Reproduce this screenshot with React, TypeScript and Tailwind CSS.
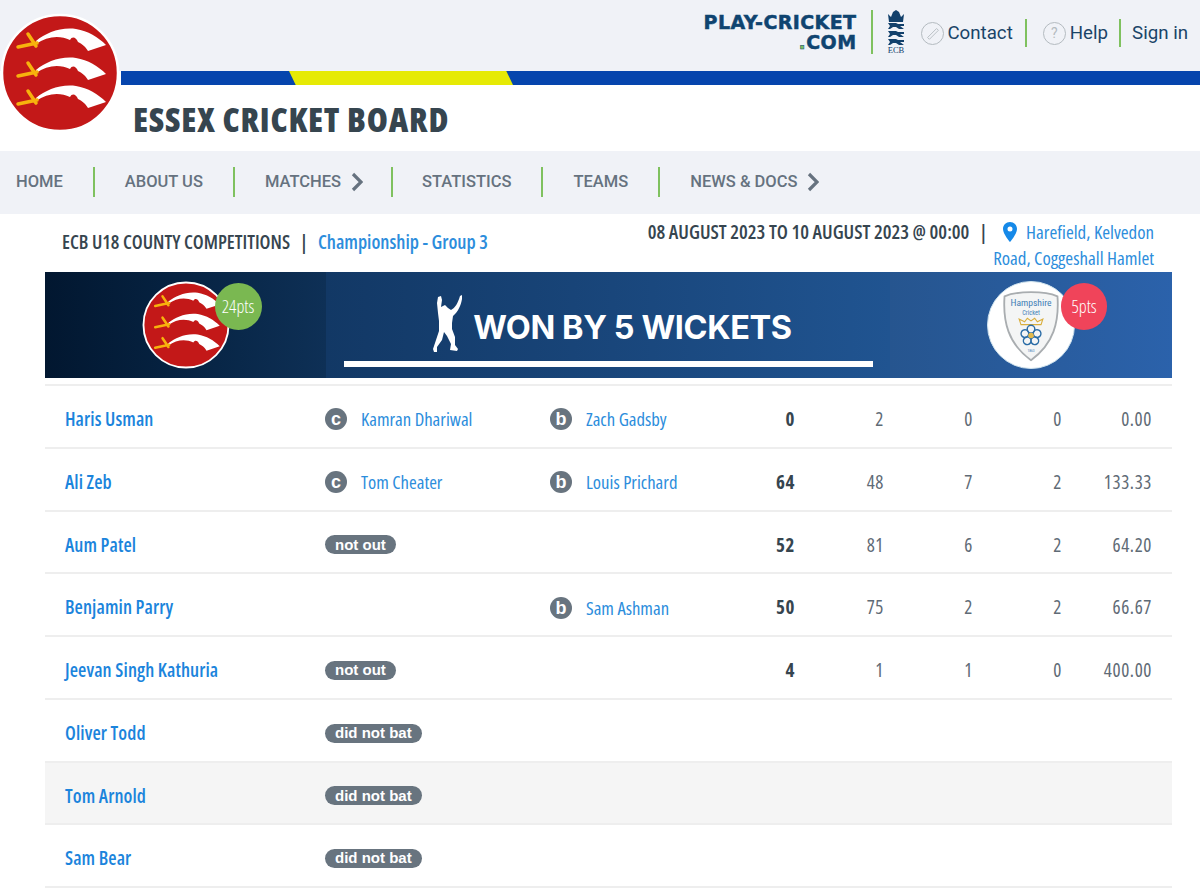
const cond = "font-['Open_Sans',sans-serif] [font-stretch:75%]";
const full = "[font-stretch:100%]";

type Row = {
  name: string;
  how?: string;
  fielder?: string;
  bowler?: string;
  stats?: string[];
  shaded?: boolean;
};

const rows: Row[] = [
  { name: "Haris Usman", how: "c", fielder: "Kamran Dhariwal", bowler: "Zach Gadsby", stats: ["0", "2", "0", "0", "0.00"] },
  { name: "Ali Zeb", how: "c", fielder: "Tom Cheater", bowler: "Louis Prichard", stats: ["64", "48", "7", "2", "133.33"] },
  { name: "Aum Patel", how: "not out", stats: ["52", "81", "6", "2", "64.20"] },
  { name: "Benjamin Parry", bowler: "Sam Ashman", stats: ["50", "75", "2", "2", "66.67"] },
  { name: "Jeevan Singh Kathuria", how: "not out", stats: ["4", "1", "1", "0", "400.00"] },
  { name: "Oliver Todd", how: "did not bat" },
  { name: "Tom Arnold", how: "did not bat", shaded: true },
  { name: "Sam Bear", how: "did not bat" },
];

const nav = [
  { label: "Home" },
  { label: "About Us" },
  { label: "Matches", more: true },
  { label: "Statistics" },
  { label: "Teams" },
  { label: "News & Docs", more: true },
];

function EssexBadge({ className }: { className: string }) {
  return (
    <svg viewBox="0 0 120 120" className={className}>
      <circle cx="60" cy="60" r="58" fill="#c31818" stroke="#fff" strokeWidth="2.5" />
      {[0, 29, 57].map((y) => (
        <g key={y} transform={`translate(0 ${y})`}>
          <path
            d="M36 28C46 20 60 14 76 16C88 18 98 24 106 32L88 38C85 33 82 31 78 29C76 24 72 23 70 27C60 22 47 23 36 31Z"
            fill="#fff"
          />
          <path d="M18 34L37 30M28 21L36 33" stroke="#f7b20d" strokeWidth="3.5" strokeLinecap="round" fill="none" />
        </g>
      ))}
    </svg>
  );
}

function Sep({ h = "h-[30px]" }: { h?: string }) {
  return <div className={`w-[2px] shrink-0 bg-[#7fc15f] ${h}`} />;
}

function EcbLogo() {
  return (
    <svg viewBox="0 0 20 44" className="w-[20px] h-[44px]">
      <path d="M2 4L5 7L7 2L10 0L13 2L15 7L18 4L17 12H3Z" fill="#12406b" />
      {[13, 21, 29].map((y) => (
        <path
          key={y}
          d={`M2 ${y}H10L12 ${y + 1}H18V${y + 3}L14 ${y + 3}L18 ${y + 6}H13L10 ${y + 4}H7L4 ${y + 6}H2L4 ${y + 3}Z`}
          fill="#12406b"
        />
      ))}
      <text x="10" y="43" textAnchor="middle" fontSize="8.5" fill="#12406b" fontFamily="Liberation Serif, serif">
        ECB
      </text>
    </svg>
  );
}

function BowlerFigure() {
  return (
    <svg viewBox="0 0 30 58" className="w-[30px] h-[58px]">
      <path
        fill="#fff"
        d="M5 2L8 1L9 5L8 12L12 10L15 13L18 15C22 13 25 8 27 1L29 0L29 4C28 10 25 17 20 21L19 28L19 34L22 42L22 50L25 54L24 56L17 55L18 49L14 41L11 37L9 45L4 52L4 57L1 57L0 54L3 45L6 36L6 26L5 18L4 8Z"
      />
    </svg>
  );
}

function HampshireBadge() {
  return (
    <div className="w-[88px] h-[88px] rounded-full bg-white border border-[#cfe3ee] flex items-center justify-center">
      <svg viewBox="0 0 70 80" className="w-[64px] h-[73px]">
        <path d="M6 8C20 2 50 2 64 8C66 36 60 60 35 78C10 60 4 36 6 8Z" fill="#f4f5f5" stroke="#a9adb0" strokeWidth="2" />
        <text x="35" y="19" textAnchor="middle" fontSize="10.5" fill="#3f7fb5" fontFamily="Roboto, sans-serif">
          Hampshire
        </text>
        <text x="35" y="28" textAnchor="middle" fontSize="7" fill="#3f7fb5" fontFamily="Roboto, sans-serif">
          Cricket
        </text>
        <path d="M24 39L22 33L28 36L31 32L35 35L39 32L42 36L48 33L46 39Z" fill="none" stroke="#d9ae3c" strokeWidth="1.2" />
        <g fill="none" stroke="#2a6ca6" strokeWidth="1.6">
          {[0, 72, 144, 216, 288].map((a) => (
            <circle key={a} cx="35" cy="44" r="4.2" transform={`rotate(${a} 35 51)`} />
          ))}
        </g>
        <circle cx="35" cy="51" r="3" fill="#e3b94a" />
        <text x="35" y="69" textAnchor="middle" fontSize="4" fill="#3f7fb5" fontFamily="Roboto, sans-serif">
          1863
        </text>
      </svg>
    </div>
  );
}

function Pill({ text }: { text: string }) {
  return (
    <span className="inline-flex items-center h-[19px] px-[10px] rounded-full bg-[#68747f] text-white text-[15px] font-bold font-['Liberation_Sans',sans-serif]">
      {text}
    </span>
  );
}

function Dis({ letter, name }: { letter: string; name: string }) {
  return (
    <div className="flex items-center gap-[14px]">
      <span className="w-[22px] h-[22px] rounded-full bg-[#68747f] text-white text-[18px] leading-none font-bold flex items-center justify-center font-['Liberation_Sans',sans-serif]">
        {letter}
      </span>
      <span className="text-[#2c8ddc] text-[18.7px]">{name}</span>
    </div>
  );
}

export default function App() {
  return (
    <div className={`relative w-[1200px] h-[890px] overflow-hidden bg-white ${cond}`}>
      <div className="absolute left-0 top-[13px] w-[120px] h-[120px] z-10">
        <EssexBadge className="w-[120px] h-[120px]" />
      </div>

      {/* top bar */}
      <div className={`h-[71px] bg-[#f0f2f7] flex items-center justify-end pr-[12px] font-['Roboto',sans-serif] ${full}`}>
        <div className="flex flex-col items-end text-[#0f4470] font-['DejaVu_Sans',sans-serif] font-bold [-webkit-text-stroke:0.5px_#0f4470] text-[19px] leading-[20px] tracking-[0.4px] mr-[15px] mb-[7px]">
          <span>PLAY-CRICKET</span>
          <span>
            <span className="text-[#7fc15f]">.</span>COM
          </span>
        </div>
        <div className="mb-[7px]">
          <Sep h="h-[44px]" />
        </div>
        <div className="ml-[13px] mr-[15px] mb-[7px]">
          <EcbLogo />
        </div>
        <div className="w-[23px] h-[23px] rounded-full border border-[#b4bbc0] flex items-center justify-center mr-[3px] mb-[5px]">
          <svg viewBox="0 0 20 20" className="w-[18px] h-[18px]">
            <path d="M4 15L14 5L16 7L6 17Z" fill="none" stroke="#b4bbc0" strokeWidth="1" />
          </svg>
        </div>
        <span className="text-[18.7px] text-[#1a4468] mr-[12px] mb-[5px]">Contact</span>
        <div className="mb-[5px]">
          <Sep h="h-[28px]" />
        </div>
        <div className="ml-[16px] w-[23px] h-[23px] rounded-full border border-[#b4bbc0] flex items-center justify-center text-[#b4bbc0] text-[14px] mr-[4px] mb-[5px]">
          ?
        </div>
        <span className="text-[18.7px] text-[#1a4468] mr-[11px] mb-[5px]">Help</span>
        <div className="mb-[5px]">
          <Sep h="h-[28px]" />
        </div>
        <span className="text-[18.7px] text-[#1a4468] ml-[11px] mb-[5px]">Sign in</span>
      </div>

      {/* colour strip */}
      <div className="h-[14px] ml-[121px] bg-[#0645ad]">
        <div className="ml-[168px] w-[224px] h-full bg-[#e6ea05] [clip-path:polygon(0_0,97%_0,100%_100%,3%_100%)]" />
      </div>

      <div className="h-[66px] pl-[133px] pt-[12px]">
        <h1 className="text-[#36454f] text-[34px] leading-[44px] font-extrabold tracking-[0.8px]">ESSEX CRICKET BOARD</h1>
      </div>

      {/* nav */}
      <div className={`h-[63px] pb-[1px] bg-[#f0f2f7] flex items-center pl-[16px] font-['Roboto',sans-serif] font-medium text-[16.5px] text-[#66727f] uppercase ${full}`}>
        {nav.map((n, i) => (
          <div key={n.label} className="flex items-center">
            <span>{n.label}</span>
            {n.more && (
              <svg viewBox="0 0 12 20" className="ml-[10px] w-[12px] h-[20px]">
                <path d="M2 2L10 10L2 18" fill="none" stroke="#66727f" strokeWidth="3.2" />
              </svg>
            )}
            {i < nav.length - 1 && (
              <div className={n.more ? "ml-[28px] mr-[29px]" : "ml-[30px] mr-[30px]"}>
                <Sep />
              </div>
            )}
          </div>
        ))}
      </div>

      {/* match info */}
      <div className="h-[58px] flex justify-between pl-[62px] pr-[46px]">
        <div className="pt-[14px] flex gap-[10px] font-semibold text-[19.2px]">
          <span className="text-[#36454f]">ECB U18 COUNTY COMPETITIONS</span>
          <span className="text-[#36454f]">|</span>
          <span className="text-[#2c8ddc]">Championship - Group 3</span>
        </div>
        <div className="pt-[5px] w-[560px] text-right leading-[26px] text-[18.9px]">
          <span className="text-[#36454f] font-semibold text-[19.6px]">08 AUGUST 2023 TO 10 AUGUST 2023 @ 00:00</span>
          <span className="text-[#36454f] font-semibold ml-[10px] mr-[16px]">|</span>
          <svg viewBox="0 0 14 20" className="inline w-[14px] h-[20px] mr-[9px] align-[-3px]">
            <path fillRule="evenodd" d="M7 0C3 0 0 3 0 7C0 12 7 20 7 20C7 20 14 12 14 7C14 3 11 0 7 0ZM7 4.5A2.5 2.5 0 1 1 7 9.5A2.5 2.5 0 1 1 7 4.5Z" fill="#1689e8" />
          </svg>
          <span className="text-[#2c8ddc]">
            Harefield, Kelvedon
            <br />
            Road, Coggeshall Hamlet
          </span>
        </div>
      </div>

      {/* result banner */}
      <div className="ml-[45px] w-[1127px] h-[106px] flex text-white">
        <div className="w-[281px] bg-gradient-to-r from-[#021730] to-[#0e3056] flex items-center justify-center">
          <div className="relative w-[88px] h-[88px]">
            <EssexBadge className="w-[88px] h-[88px]" />
            <div className="absolute left-[73px] top-[2px] w-[47px] h-[47px] rounded-full bg-[#7ab851] flex items-center justify-center text-[18px] font-light">
              24pts
            </div>
          </div>
        </div>
        <div className="w-[564px] bg-gradient-to-r from-[#123865] to-[#205491] flex flex-col items-center">
          <div className={`h-[89px] flex items-end gap-[10px] pl-[9px] pb-[8px] ${full}`}>
            <BowlerFigure />
            <span className="font-['Inter',sans-serif] font-bold text-[32.5px] leading-[44px] tracking-[-0.4px] whitespace-nowrap mb-[3px]">
              WON BY 5 WICKETS
            </span>
          </div>
          <div className="w-[529px] h-[6px] bg-white" />
        </div>
        <div className="flex-1 bg-gradient-to-r from-[#26558f] to-[#2b62ab] flex items-center justify-center">
          <div className="relative">
            <HampshireBadge />
            <div className="absolute left-[74px] top-[2px] w-[46px] h-[47px] rounded-full bg-[#f0445a] flex items-center justify-center text-[18px] font-light">
              5pts
            </div>
          </div>
        </div>
      </div>

      {/* batting card */}
      <div className="ml-[45px] w-[1127px] mt-[6px] border-t-2 border-[#eeeeee]">
        {rows.map((r) => (
          <div
            key={r.name}
            className={`h-[62.75px] pt-[6px] px-[20px] border-b-2 border-[#eeeeee] grid grid-cols-[260px_225px_155px_90px_89px_89px_89px_90px] items-center text-[19px] ${
              r.shaded ? "bg-[#f5f5f5]" : ""
            }`}
          >
            <span className="text-[#1b84dc] font-semibold whitespace-nowrap tracking-[0.1px]">{r.name}</span>
            <div className="flex">
              {r.fielder ? <Dis letter={r.how!} name={r.fielder} /> : r.how ? <Pill text={r.how} /> : null}
            </div>
            <div className="flex">{r.bowler && <Dis letter="b" name={r.bowler} />}</div>
            {r.stats?.map((s, i) => (
              <span key={i} className={`text-right tracking-[0.6px] ${i === 0 ? "font-bold text-[#36454f]" : "text-[#5f6b76]"}`}>
                {s}
              </span>
            ))}
          </div>
        ))}
      </div>
    </div>
  );
}
